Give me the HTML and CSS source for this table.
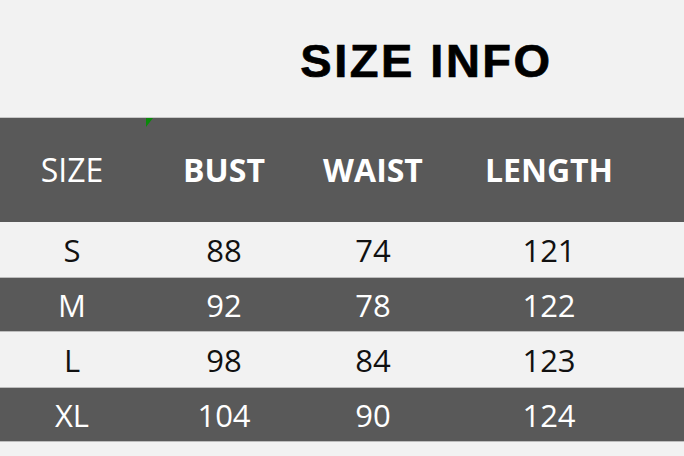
FILE: index.html
```html
<!DOCTYPE html>
<html>
<head>
<meta charset="utf-8">
<link rel="stylesheet" href="styles.css">
</head>
<body>
<div class="page">
  <div class="title-area">
    <h1 class="title">SIZE INFO</h1>
  </div>
  <div class="table">
    <div class="row head">
      <span class="flag"></span>
      <div class="cell"><span class="txt">SIZE</span></div>
      <div class="cell bold"><span class="txt">BUST</span></div>
      <div class="cell bold"><span class="txt">WAIST</span></div>
      <div class="cell bold"><span class="txt">LENGTH</span></div>
    </div>
    <div class="row light">
      <div class="cell"><span class="txt">S</span></div>
      <div class="cell"><span class="txt">88</span></div>
      <div class="cell"><span class="txt">74</span></div>
      <div class="cell"><span class="txt">121</span></div>
    </div>
    <div class="row dark">
      <div class="cell"><span class="txt">M</span></div>
      <div class="cell"><span class="txt">92</span></div>
      <div class="cell"><span class="txt">78</span></div>
      <div class="cell"><span class="txt">122</span></div>
    </div>
    <div class="row light">
      <div class="cell"><span class="txt">L</span></div>
      <div class="cell"><span class="txt">98</span></div>
      <div class="cell"><span class="txt">84</span></div>
      <div class="cell"><span class="txt">123</span></div>
    </div>
    <div class="row dark">
      <div class="cell"><span class="txt">XL</span></div>
      <div class="cell"><span class="txt">104</span></div>
      <div class="cell"><span class="txt">90</span></div>
      <div class="cell"><span class="txt">124</span></div>
    </div>
  </div>
</div>
</body>
</html>
```
FILE: styles.css
```css
html, body {
  margin: 0;
  padding: 0;
  background: #f2f2f2;
}
.page {
  width: 684px;
  height: 456px;
  overflow: hidden;
  background: #f2f2f2;
}
.title-area {
  height: 117px;
  display: flex;
  justify-content: center;
  padding-left: 169px;
  box-sizing: border-box;
}
.title {
  margin: 0;
  padding-top: 37px;
  font-family: "Liberation Sans", Arial, sans-serif;
  font-weight: 700;
  font-size: 47px;
  line-height: 47px;
  letter-spacing: 2.5px;
  color: #000;
  -webkit-text-stroke: 0.7px #000;
}
.table {
  display: flex;
  flex-direction: column;
}
.row {
  display: grid;
  grid-template-columns: 144px 160px 138px 214px 28px;
  align-items: center;
  height: 55px;
  box-sizing: border-box;
  font-family: "Open Sans", "Noto Sans", sans-serif;
  font-size: 31px;
}
.head {
  position: relative;
  height: 105px;
  background: #595959;
  border-top: 1px solid #c8c8c8;
  color: #fff;
  padding-bottom: 2px;
  font-size: 32px;
}
.light {
  background: #f2f2f2;
  color: #111;
}
.dark {
  background: #595959;
  color: #fff;
  border-top: 1px solid #bdbdbd;
  border-bottom: 1px solid #bdbdbd;
}
.cell {
  display: flex;
  justify-content: center;
}
.txt {
  display: inline-block;
  white-space: nowrap;
}
.bold .txt {
  font-weight: 700;
}
.flag {
  position: absolute;
  left: 146px;
  top: 0;
  width: 0;
  height: 0;
  border-top: 9px solid #0a8a0a;
  border-right: 7px solid transparent;
}
```
